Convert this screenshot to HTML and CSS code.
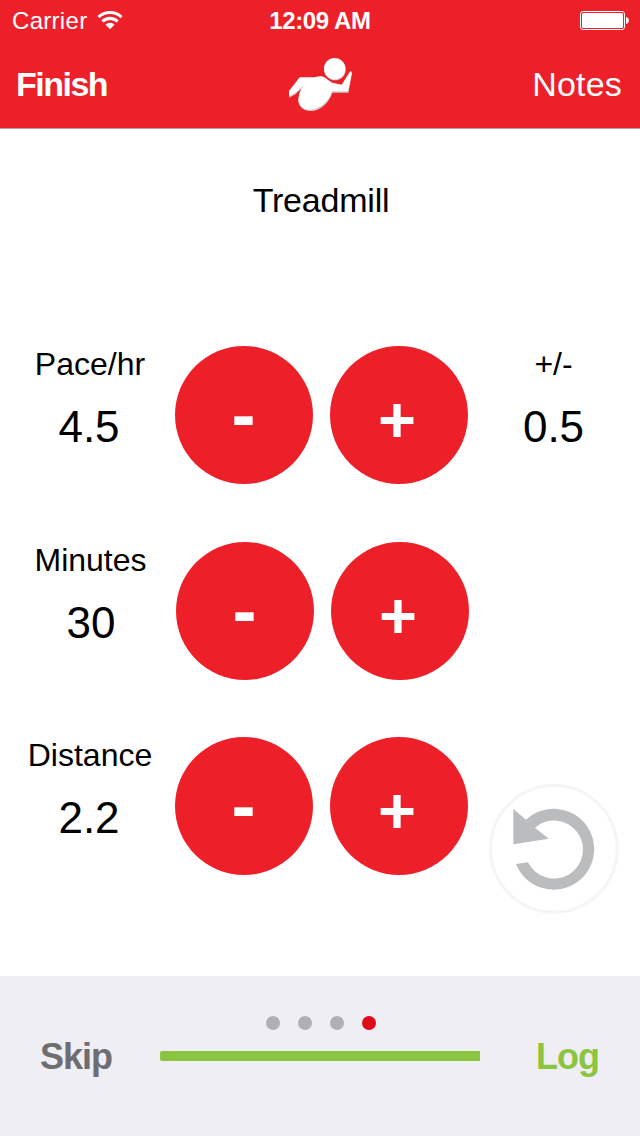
FILE: index.html
```html
<!DOCTYPE html>
<html lang="en">
<head>
<meta charset="utf-8">
<title>Treadmill</title>
<link rel="stylesheet" href="styles.css">
</head>
<body>
<div class="app">
  <header class="header">
    <div class="status">
      <div class="carrier"><span>Carrier</span>
        <svg class="wifi" viewBox="0 0 26 20"><g fill="none" stroke="#fff" stroke-width="3.1"><path d="M1.500 7.200a16.600 16.600 0 0 1 23 0"/><path d="M5.400 11.500a10.800 10.800 0 0 1 15.200 0"/></g><path d="M8.500 14.700a6.200 6.200 0 0 1 9 0L13 19.300z" fill="#fff"/></svg>
      </div>
      <div class="time">12:09 AM</div>
      <svg class="battery" viewBox="0 0 50 20"><rect x=".5" y=".5" width="44" height="18" rx="2.5" fill="none" stroke="#fff"/><rect x="2" y="2" width="41" height="15" rx="1.5" fill="#fff"/><path d="M46 6c1.700.3 2.800 1.500 2.800 3.500S47.700 12.700 46 13z" fill="#fff"/></svg>
    </div>
    <nav class="nav">
      <div class="finish">Finish</div>
      <svg class="logo" viewBox="0 0 240 210">
        <path fill="#d3c9ca" transform="translate(1 4)" d="M27 123L59 82H105C116 77 128 77 137 84L157 98L185 104L209 66Q215 60 215 68L204 124L156 124C147 154 119 179 91 179C65 179 51 162 56 140C58 128 62 118 72 105L45 129L27 139Z"/>
        <path fill="#fff" d="M27 123L59 82H105C116 77 128 77 137 84L157 98L185 104L209 66Q215 60 215 68L204 124L156 124C147 154 119 179 91 179C65 179 51 162 56 140C58 128 62 118 72 105L45 129L27 139Z"/>
        <circle cx="165" cy="60" r="36" fill="#ed2029"/>
        <circle cx="165" cy="59" r="32" fill="#d3c9ca"/>
        <circle cx="164" cy="56" r="32" fill="#fff"/>
      </svg>
      <div class="notes">Notes</div>
    </nav>
  </header>
  <main class="main">
    <h1 class="title">Treadmill</h1>
    <section class="row">
      <div class="field"><div class="label">Pace/hr</div><div class="value">4.5</div></div>
      <div class="round minus">-</div><div class="round plus">+</div>
      <div class="field"><div class="label">+/-</div><div class="value">0.5</div></div>
    </section>
    <section class="row row-minutes">
      <div class="field"><div class="label">Minutes</div><div class="value">30</div></div>
      <div class="round minus">-</div><div class="round plus">+</div>
    </section>
    <section class="row">
      <div class="field"><div class="label">Distance</div><div class="value">2.2</div></div>
      <div class="round minus">-</div><div class="round plus">+</div>
      <svg class="undo" viewBox="27 27 390 390"><circle cx="221.500" cy="221.500" r="190" fill="#fff" stroke="#f4f5f5" stroke-width="9"/><path d="M100 102L138 134A121.500 121.500 0 1 1 108 267L144 262A87 87 0 1 0 165 158L206 191L100 208Z" fill="#bbbcbe"/></svg>
    </section>
  </main>
  <footer class="footer">
    <div class="skip">Skip</div>
    <div class="progress">
      <div class="dots"><i class="dot"></i><i class="dot"></i><i class="dot"></i><i class="dot active"></i></div>
      <div class="bar"></div>
    </div>
    <div class="log">Log</div>
  </footer>
</div>
</body>
</html>
```
FILE: styles.css
```css
* { box-sizing: border-box; }
body { margin: 0; font-family: "Liberation Sans", Arial, sans-serif; color: #000; background: #fff; }
.app { width: 640px; height: 1136px; display: flex; flex-direction: column; overflow: hidden; white-space: nowrap; }
svg { display: block; overflow: visible; }

.header { height: 129px; background: #ed2029; color: #fff; border-bottom: 1px solid #aaa5a5; }
.status { height: 40px; display: grid; grid-template-columns: 1fr auto 1fr; font-size: 24px; line-height: 41px; }
.carrier { display: flex; padding-left: 12px; letter-spacing: 0.3px; }
.wifi { width: 26px; height: 20px; margin: 10px 0 0 10px; }
.time { font-weight: bold; letter-spacing: -0.400px; line-height: 42px; }
.battery { width: 50px; height: 20px; justify-self: end; margin: 11px 10px 0 0; }
.nav { height: 88px; display: grid; grid-template-columns: 1fr 80px 1fr; font-size: 34px; line-height: 88px; }
.finish { padding-left: 16px; font-weight: bold; letter-spacing: -1.500px; }
.logo { width: 80px; height: 70px; margin-top: 10px; }
.notes { justify-self: end; padding-right: 18px; letter-spacing: 0.200px; }

.main { flex: 1; padding-left: 5px; }
.title { margin: 51px 0 126px -5px; height: 40px; line-height: 40px; font-size: 34px; font-weight: normal; text-align: center; letter-spacing: -0.200px; padding-left: 2px; }
.row { display: grid; grid-template-columns: 170px 155px 138px 170px; height: 138px; margin-bottom: 57px; }
.row-minutes { margin-top: 58px; }
.row-minutes .round { transform: translateX(1px); }
.field { text-align: center; }
.plus + .field { margin: 0 -2px 0 2px; }
.plus + .field .label { padding-right: 3px; }
.plus + .field .value { padding-right: 3px; }
.label { height: 36px; line-height: 36px; font-size: 32px; }
.value { height: 50px; line-height: 50px; margin-top: 20px; font-size: 44px; padding-right: 2px; }
.row-minutes .label { padding-left: 1px; }
.row-minutes .value { padding: 0 0 0 2px; }
.round { width: 138px; height: 138px; border-radius: 50%; background: #ed2029; color: #fff; font-weight: bold; line-height: 138px; text-align: center; }
.minus { font-size: 72px; line-height: 136px; padding-right: 1px; }
.plus { font-size: 65px; line-height: 148px; padding-right: 4px; }
.undo { width: 130px; height: 130px; margin: 47px 0 0 21px; }

.footer { height: 160px; background: #efeef4; display: grid; grid-template-columns: 160px 320px 160px; font-size: 36px; font-weight: bold; line-height: 161px; letter-spacing: -1px; }
.skip { padding-left: 40px; color: #6d6d72; }
.log { padding-left: 56px; color: #8cc540; }
.progress { padding-top: 40px; }
.dots { display: flex; justify-content: center; gap: 18px; padding-left: 2px; height: 14px; }
.dot { width: 14px; height: 14px; border-radius: 50%; background: #afafb4; }
.dot.active { background: #e00b18; }
.bar { height: 10px; margin-top: 21px; background: #8bc43f; border-radius: 2px 0 0 2px; }
```
